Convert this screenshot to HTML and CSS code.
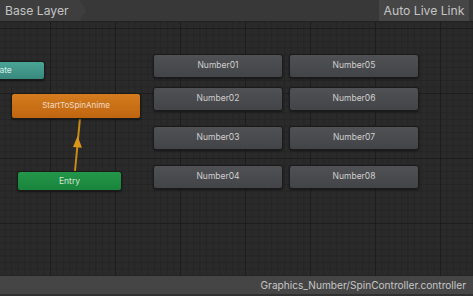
FILE: index.html
```html
<!DOCTYPE html>
<html>
  <head>
    <meta charset="utf-8">
    <title>Animator</title>
    <link rel="stylesheet" href="styles.css">
  </head>
  <body>
    <div class="toolbar">
      <div class="crumb">Base Layer</div>
      <div class="live-link">Auto Live Link</div>
    </div>

    <div class="graph">
      <svg class="transition" width="473" height="256" viewBox="0 0 473 256">
        <line x1="75" y1="149" x2="80" y2="96" stroke="#c98b16" stroke-width="2"/>
        <polygon points="77.6,114 73,125 82,125.8" fill="#d9961b"/>
      </svg>

      <div class="node any-state" style="left:-60px; top:39px;">Any State</div>
      <div class="node default" style="left:11px; top:71px;">StartToSpinAnime</div>
      <div class="node entry" style="left:17px; top:149px;">Entry</div>

      <div class="node state" style="left:153px; top:32px;">Number01</div>
      <div class="node state" style="left:153px; top:65px;">Number02</div>
      <div class="node state" style="left:153px; top:104px;">Number03</div>
      <div class="node state" style="left:153px; top:143px;">Number04</div>
      <div class="node state" style="left:289px; top:32px;">Number05</div>
      <div class="node state" style="left:289px; top:65px;">Number06</div>
      <div class="node state" style="left:289px; top:104px;">Number07</div>
      <div class="node state" style="left:289px; top:143px;">Number08</div>
    </div>

    <div class="statusbar">Graphics_Number/SpinController.controller</div>
  </body>
</html>
```

FILE: styles.css
```css
html, body {
  margin: 0;
  padding: 0;
  width: 473px;
  height: 296px;
  overflow: hidden;
}

body {
  display: flex;
  flex-direction: column;
  background-color: #2a2a2a;
  font-family: Inter, "Noto Sans", sans-serif;
  color: #c4c4c4;
}

/* 上部ツールバー */
.toolbar {
  height: 22px;
  flex: none;
  display: flex;
  justify-content: space-between;
  background-color: #383838;
  border-bottom: 1px solid #222;
  box-sizing: border-box;
}

.crumb {
  width: 86px;
  padding-left: 5px;
  box-sizing: border-box;
  line-height: 21px;
  font-size: 12.2px;
  color: #c4c4c4;
  background-color: #3e3e3e;
  clip-path: polygon(0 0, 79px 0, 86px 50%, 79px 100%, 0 100%);
}

.live-link {
  width: 90px;
  margin-right: 4px;
  text-align: center;
  line-height: 21px;
  font-size: 12.2px;
  color: #c4c4c4;
  background-color: #464646;
}

/* グラフ領域 */
.graph {
  position: relative;
  flex: 1;
  overflow: hidden;
  background-color: #2a2a2a;
  background-image:
    linear-gradient(to right, #1d1d1d 1px, transparent 1px),
    linear-gradient(to bottom, #1d1d1d 1px, transparent 1px),
    linear-gradient(to right, #252525 1px, transparent 1px),
    linear-gradient(to bottom, #252525 1px, transparent 1px);
  background-size: 65px 65px, 65px 65px, 6.5px 6.5px, 6.5px 6.5px;
  background-position: 50px 6px, 50px 6px, 50px 6px, 50px 6px;
}

.transition {
  position: absolute;
  left: 0;
  top: 0;
}

.node {
  position: absolute;
  width: 130px;
  height: 24px;
  box-sizing: border-box;
  border-radius: 3px;
  border: 1px solid #1b1b1b;
  text-align: center;
  line-height: 21px;
  font-size: 8.5px;
  color: #cfcfcf;
  box-shadow: 0 1px 2px rgba(0, 0, 0, 0.5);
}

.state {
  background: linear-gradient(#505154, #434447);
}

.default {
  height: 26px;
  line-height: 23px;
  font-size: 8px;
  color: #f0dcc6;
  background: linear-gradient(#d47c1e, #bf6510);
}

.entry {
  width: 105px;
  height: 20px;
  line-height: 18px;
  color: #d0e8d3;
  background: linear-gradient(#23974a, #1a843c);
}

.any-state {
  width: 105px;
  height: 19px;
  line-height: 17px;
  color: #d4ebe6;
  background: linear-gradient(#4aa596, #39887d);
}

/* 下部ステータスバー */
.statusbar {
  height: 18px;
  flex: none;
  padding-right: 7px;
  text-align: right;
  line-height: 18px;
  font-size: 10.15px;
  color: #c6c6c6;
  background-color: #454545;
  border-bottom: 2px solid #303030;
}
```
